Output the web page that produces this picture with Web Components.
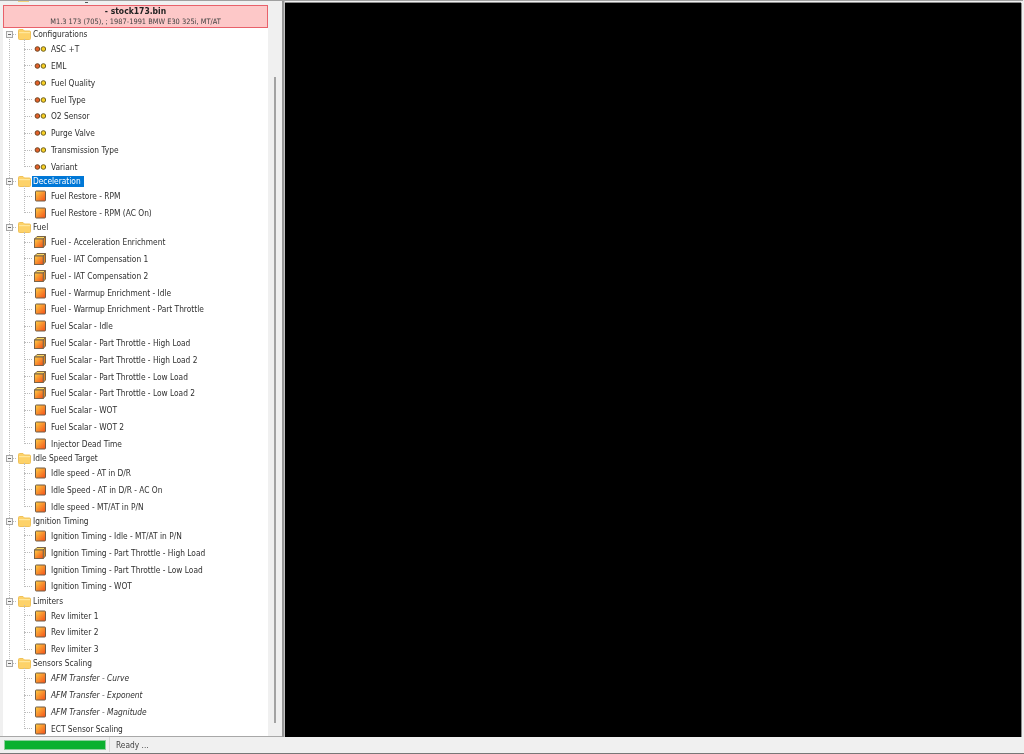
<!DOCTYPE html>
<html>
<head>
<meta charset="utf-8">
<title>stock173.bin</title>
<style>
  html, body { margin: 0; height: 100%; background: #f0f0f0; overflow: hidden; }
  body { font: 8.3px "DejaVu Sans Condensed", "DejaVu Sans", sans-serif; font-stretch: condensed; color: #2e2e2e; }
</style>
</head>
<body>

<template id="app-window-template">
  <style>
    :host { display: grid; grid-template-rows: 1fr 15px; width: 1024px; height: 754px; padding: 0 1px 1px 0; box-sizing: border-box; border-bottom: 1px solid #777; background: #f0f0f0; filter: blur(0.35px); }
    #main { display: flex; min-height: 0; border-top: 1px solid #a0a0a0; }
    #side { width: 282px; flex: none; padding: 0 0 0 3px; box-sizing: border-box; display: flex; flex-direction: column; border-bottom: 1px solid #a8a8a8; position: relative; }
    #splitter { width: 3px; flex: none; background: linear-gradient(90deg, #989898 0 2px, #c4c4c4 2px); }
    #view { flex: 1; background: #000; margin-top: 2px; box-shadow: 1px 0 0 #8c8c8c, 0 1px 0 #8c8c8c, 0 -1px 0 #8c8c8c; margin-right: 2px; }
    #clip { position: absolute; left: 18px; top: 0; width: 11px; height: 1px; background: #f3d27c; }
    #dot { position: absolute; left: 85px; top: 1px; width: 3px; height: 1px; background: #555; }
  </style>
  <div id="main">
    <div id="side"><div id="clip"></div><div id="dot"></div><slot name="side"></slot></div>
    <div id="splitter"></div>
    <div id="view"></div>
  </div>
  <slot name="status"></slot>
</template>

<template id="file-header-template">
  <style>
    :host { display: block; margin-top: 4px; height: 23px; box-sizing: border-box; background: #fdc8c8; border: 1px solid #e8616a; text-align: center; margin-right: 14px; }
    div { height: 10.5px; line-height: 10.5px; white-space: nowrap; }
    #name { font-weight: 700; font-size: 8.5px; color: #222; }
    #desc { font-size: 7.4px; color: #444; }
  </style>
  <div id="name"><slot name="name"></slot></div>
  <div id="desc"><slot name="desc"></slot></div>
</template>

<template id="tree-panel-template">
  <style>
    :host { display: flex; flex: 1; min-height: 0; }
    #list { flex: 1; background: #fff; overflow: hidden; padding-top: 0.3px; }
    #scroll { width: 14px; flex: none; background: #f0f0f0; position: relative; }
    #thumb { position: absolute; left: 6px; top: 49px; bottom: 13px; width: 2px; background: #a3a3a3; }
  </style>
  <div id="list"><slot></slot></div>
  <div id="scroll"><div id="thumb"></div></div>
</template>

<template id="tree-folder-template">
  <style>
    :host { display: block; position: relative; }
    /* dotted trunk running from this folder's box down to the next folder */
    :host(:not([last]))::before { content: ""; position: absolute; left: 6px; top: 7px; bottom: -7px; border-left: 1px dotted #bcbcbc; }
    #head { display: flex; align-items: center; height: 12.35px; position: relative; }
    #box { width: 5px; height: 5px; margin-left: 3px; border: 1px solid #a6a6a6; background: #f4f4f4; position: relative; flex: none; box-sizing: content-box; }
    #box::after { content: ""; position: absolute; left: 1px; right: 1px; top: 2px; height: 1px; background: #666; }
    #tick { width: 3px; margin: 0 1.5px 0 0; border-top: 1px dotted #bcbcbc; flex: none; }
    svg { flex: none; display: block; }
    #label { margin-left: 1.5px; padding: 0 3px 0 1px; line-height: 11px; white-space: nowrap; }
    :host([selected]) #label { background: #0078d7; color: #fff; }
    #items { position: relative; }
    #items::before { content: ""; position: absolute; left: 21px; top: -2px; bottom: 8px; border-left: 1px dotted #bcbcbc; }
  </style>
  <div id="head">
    <div id="box"></div>
    <div id="tick"></div>
    <svg width="13" height="11" viewBox="0 0 13 11"><path d="M0.5 1.5 Q0.5 0.5 1.5 0.5 H5 L6.5 2 H11.5 Q12.5 2 12.5 3 V9.5 Q12.5 10.5 11.5 10.5 H1.5 Q0.5 10.5 0.5 9.5 Z" fill="#fdd269" stroke="#f0c25a"/><rect x="1" y="3" width="11" height="1.2" fill="#ffe79c"/></svg>
    <div id="label"><slot name="label"></slot></div>
  </div>
  <div id="items"><slot></slot></div>
</template>

<template id="tree-item-template">
  <style>
    :host { display: flex; align-items: center; height: 16.83px; padding-left: 21px; white-space: nowrap; }
    :host([italic]) #label { font-style: italic; }
    #dash { width: 8px; margin-right: 2px; border-top: 1px dotted #bcbcbc; flex: none; }
    svg { flex: none; display: block; }
    #label { margin-left: 5px; }
  </style>
  <div id="dash"></div>
  <svg id="icon" width="12" height="12" viewBox="0 0 12 12"></svg>
  <div id="label"><slot></slot></div>
</template>

<template id="status-bar-template">
  <style>
    :host { display: flex; align-items: center; height: 15px; background: #f0f0f0; padding-left: 4px; }
    #progress { width: 102px; height: 10px; background: #0bb02f; flex: none; box-sizing: border-box; border: 1px solid #8ccf9c; }
    #divider { width: 1px; height: 15px; background: #d8d8d8; margin: 0 6px 0 3px; flex: none; }
    #text { color: #444; }
  </style>
  <div id="progress"></div>
  <div id="divider"></div>
  <div id="text"><slot></slot></div>
</template>

<script>
function shadowFrom(el, id) {
  const root = el.attachShadow({mode: "open"});
  root.appendChild(document.getElementById(id).content.cloneNode(true));
  return root;
}

const GRADIENT = `<defs><linearGradient id="g" x1="0" y1="0" x2="1" y2="1"><stop offset="0" stop-color="#fed044"/><stop offset="1" stop-color="#f34e18"/></linearGradient></defs>`;

const ICONS = {
  // two small indicator lamps
  option: `<circle cx="3.4" cy="6" r="2.3" fill="#e4602a" stroke="#6e4520"/>
           <circle cx="9.4" cy="6" r="2.3" fill="#f8cf24" stroke="#6e6020"/>`,
  // flat map table
  map: `${GRADIENT}<rect x="1.5" y="1" width="10" height="10" rx="0.8" fill="url(#g)" stroke="#6e5c48"/>`,
  // 3d map table
  cube: `${GRADIENT}<path d="M3 0.5 H11.5 L9.2 3 H0.5 Z" fill="#fbd660" stroke="#7a6448" stroke-linejoin="round"/>
         <path d="M9.2 3 L11.5 0.5 V9 L9.2 11.5 Z" fill="#e08a24" stroke="#7a6448" stroke-linejoin="round"/>
         <rect x="0.5" y="3" width="8.7" height="8.5" fill="url(#g)" stroke="#7a6448"/>`
};

class AppWindow extends HTMLElement {
  constructor() { super(); shadowFrom(this, "app-window-template"); }
}
class FileHeader extends HTMLElement {
  constructor() { super(); shadowFrom(this, "file-header-template"); }
}
class TreePanel extends HTMLElement {
  constructor() { super(); shadowFrom(this, "tree-panel-template"); }
}
class TreeFolder extends HTMLElement {
  constructor() { super(); shadowFrom(this, "tree-folder-template"); }
}
class TreeItem extends HTMLElement {
  constructor() {
    super();
    this._shadow = shadowFrom(this, "tree-item-template");
  }
  connectedCallback() {
    this._shadow.getElementById("icon").innerHTML = ICONS[this.getAttribute("icon") || "map"];
  }
}
class StatusBar extends HTMLElement {
  constructor() { super(); shadowFrom(this, "status-bar-template"); }
}

customElements.define("app-window", AppWindow);
customElements.define("file-header", FileHeader);
customElements.define("tree-panel", TreePanel);
customElements.define("tree-folder", TreeFolder);
customElements.define("tree-item", TreeItem);
customElements.define("status-bar", StatusBar);
</script>

<app-window>
  <file-header slot="side">
    <span slot="name">- stock173.bin</span>
    <span slot="desc">M1.3 173 (705), ; 1987-1991 BMW E30 325i, MT/AT</span>
  </file-header>
  <tree-panel slot="side">
    <tree-folder>
      <span slot="label">Configurations</span>
      <tree-item icon="option">ASC +T</tree-item>
      <tree-item icon="option">EML</tree-item>
      <tree-item icon="option">Fuel Quality</tree-item>
      <tree-item icon="option">Fuel Type</tree-item>
      <tree-item icon="option">O2 Sensor</tree-item>
      <tree-item icon="option">Purge Valve</tree-item>
      <tree-item icon="option">Transmission Type</tree-item>
      <tree-item icon="option">Variant</tree-item>
    </tree-folder>
    <tree-folder selected>
      <span slot="label">Deceleration</span>
      <tree-item>Fuel Restore - RPM</tree-item>
      <tree-item>Fuel Restore - RPM (AC On)</tree-item>
    </tree-folder>
    <tree-folder>
      <span slot="label">Fuel</span>
      <tree-item icon="cube">Fuel - Acceleration Enrichment</tree-item>
      <tree-item icon="cube">Fuel - IAT Compensation 1</tree-item>
      <tree-item icon="cube">Fuel - IAT Compensation 2</tree-item>
      <tree-item>Fuel - Warmup Enrichment - Idle</tree-item>
      <tree-item>Fuel - Warmup Enrichment - Part Throttle</tree-item>
      <tree-item>Fuel Scalar - Idle</tree-item>
      <tree-item icon="cube">Fuel Scalar - Part Throttle - High Load</tree-item>
      <tree-item icon="cube">Fuel Scalar - Part Throttle - High Load 2</tree-item>
      <tree-item icon="cube">Fuel Scalar - Part Throttle - Low Load</tree-item>
      <tree-item icon="cube">Fuel Scalar - Part Throttle - Low Load 2</tree-item>
      <tree-item>Fuel Scalar - WOT</tree-item>
      <tree-item>Fuel Scalar - WOT 2</tree-item>
      <tree-item>Injector Dead Time</tree-item>
    </tree-folder>
    <tree-folder>
      <span slot="label">Idle Speed Target</span>
      <tree-item>Idle speed - AT in D/R</tree-item>
      <tree-item>Idle Speed - AT in D/R - AC On</tree-item>
      <tree-item>Idle speed - MT/AT in P/N</tree-item>
    </tree-folder>
    <tree-folder>
      <span slot="label">Ignition Timing</span>
      <tree-item>Ignition Timing - Idle - MT/AT in P/N</tree-item>
      <tree-item icon="cube">Ignition Timing - Part Throttle - High Load</tree-item>
      <tree-item>Ignition Timing - Part Throttle - Low Load</tree-item>
      <tree-item>Ignition Timing - WOT</tree-item>
    </tree-folder>
    <tree-folder>
      <span slot="label">Limiters</span>
      <tree-item>Rev limiter 1</tree-item>
      <tree-item>Rev limiter 2</tree-item>
      <tree-item>Rev limiter 3</tree-item>
    </tree-folder>
    <tree-folder last>
      <span slot="label">Sensors Scaling</span>
      <tree-item italic>AFM Transfer - Curve</tree-item>
      <tree-item italic>AFM Transfer - Exponent</tree-item>
      <tree-item italic>AFM Transfer - Magnitude</tree-item>
      <tree-item>ECT Sensor Scaling</tree-item>
    </tree-folder>
  </tree-panel>
  <status-bar slot="status">Ready ...</status-bar>
</app-window>

</body>
</html>
